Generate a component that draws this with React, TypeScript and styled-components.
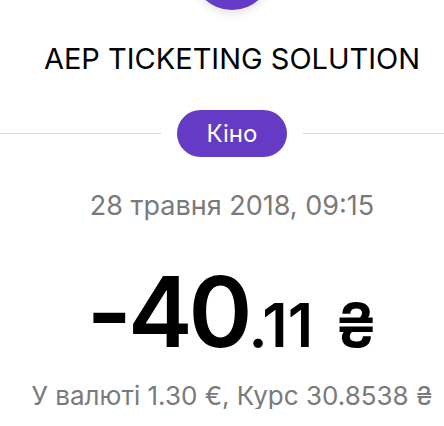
import React from 'react';
import styled, { createGlobalStyle } from 'styled-components';

const GlobalStyle = createGlobalStyle`
  html, body {
    margin: 0;
    padding: 0;
    background: #fff;
    overflow: hidden;
  }
  body {
    font-family: Inter, "Liberation Sans", Arial, sans-serif;
  }
`;

const Page = styled.div`
  width: 464px;
  display: flex;
  flex-direction: column;
  align-items: center;
`;

const Avatar = styled.div`
  width: 80px;
  height: 80px;
  margin-top: -70px;
  border-radius: 50%;
  background: #653bc6;
  box-shadow: 0 3px 10px rgba(0, 0, 0, 0.12);
`;

const Title = styled.h1`
  margin: 34px 0 0;
  font-size: 29px;
  line-height: 29px;
  font-weight: 400;
  color: #000;
  white-space: nowrap;
`;

const DividerRow = styled.div`
  align-self: stretch;
  margin-top: 37px;
  display: flex;
  align-items: center;
  gap: 16px;
`;

const Line = styled.div`
  flex: 1;
  height: 1px;
  background: #d6d6d6;
`;

const Category = styled.div`
  width: 110px;
  height: 47px;
  border-radius: 24px;
  background: #653bc6;
  color: #fff;
  font-size: 24px;
  display: flex;
  align-items: center;
  justify-content: center;
`;

const DateText = styled.div`
  margin-top: 35px;
  font-size: 27px;
  line-height: 27px;
  color: #7a7a7a;
  white-space: nowrap;
`;

const Amount = styled.div`
  margin-top: 44px;
  display: flex;
  align-items: baseline;
  color: #000;
  font-weight: 600;
  white-space: nowrap;
`;

const AmountPart = styled.span<{ $size: number; $spacing?: number; $gap?: number }>`
  font-size: ${p => p.$size}px;
  line-height: ${p => p.$size}px;
  letter-spacing: ${p => p.$spacing ?? 0}px;
  margin-left: ${p => p.$gap ?? 0}px;
`;

const Rate = styled.div`
  margin-top: 23px;
  font-size: 26px;
  line-height: 26px;
  color: #7a7a7a;
  white-space: nowrap;
`;

const App: React.FC = () => {
  return (
    <Page>
      <GlobalStyle />
      <Avatar />
      <Title>AEP TICKETING SOLUTION</Title>
      <DividerRow>
        <Line />
        <Category>Кіно</Category>
        <Line />
      </DividerRow>
      <DateText>28 травня 2018, 09:15</DateText>
      <Amount>
        <AmountPart $size={97} $spacing={-4}>-40</AmountPart>
        <AmountPart $size={60}>.11</AmountPart>
        <AmountPart $size={60} $gap={22}>₴</AmountPart>
      </Amount>
      <Rate>У валюті 1.30 €, Курс 30.8538 ₴</Rate>
    </Page>
  );
};

export default App;
